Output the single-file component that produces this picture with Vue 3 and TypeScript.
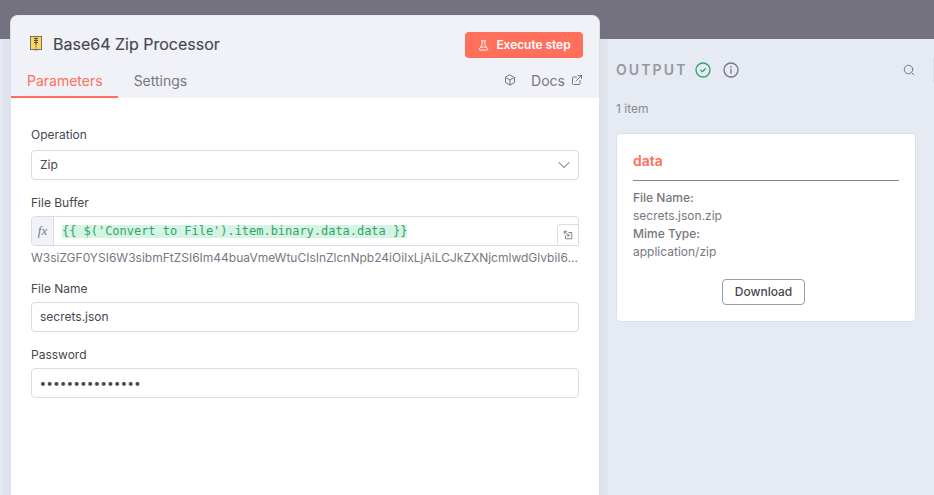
<template>
  <div class="ndv">
    <div class="input-edge" />

    <main class="panel">
      <header class="panel-header">
        <div class="title-row">
          <svg class="node-icon" viewBox="0 0 12 15">
            <rect x="0.5" y="0.5" width="11" height="13" fill="#ffd85b" stroke="#777260" />
            <path d="M6 1v12" stroke="#d3b55a" stroke-width="2" />
            <path d="M4 2.500h4M4 4.500h4M4 6.500h4" stroke="#4a4840" />
            <path d="M6 2v7" stroke="#6a6350" />
            <path d="M4 14.500h4" stroke="#c9c9cf" />
          </svg>
          <h1 class="title">Base64 Zip Processor</h1>
          <button class="execute">
            <svg class="flask" viewBox="0 0 24 24">
              <path d="M7.500 2h9M9 2v8.500L2.800 19.600A1.600 1.600 0 0 0 4.200 22h15.600a1.600 1.600 0 0 0 1.400-2.400L15 10.500V2M6 15.500h12" />
            </svg>
            <span>Execute step</span>
          </button>
        </div>

        <nav class="tabs">
          <a
            v-for="tab in tabs"
            :key="tab"
            class="tab"
            :class="{ active: tab === activeTab }"
            @click="activeTab = tab"
            >{{ tab }}</a
          >
          <svg class="cube" viewBox="0 0 24 24">
            <path d="M12 2l9 5v10l-9 5-9-5V7zM3 7l9 5 9-5M12 12v10" />
          </svg>
          <a class="docs">
            Docs
            <svg class="external" viewBox="0 0 24 24">
              <path d="M15 3h6v6M10 14L21 3M18 13v6a2 2 0 0 1-2 2H5a2 2 0 0 1-2-2V8a2 2 0 0 1 2-2h6" />
            </svg>
          </a>
        </nav>
      </header>

      <div class="form">
        <div class="field operation">
          <label>Operation</label>
          <div class="control">
            <span>Zip</span>
            <svg class="chevron" viewBox="0 0 12 8"><path d="M1 1.500l5 5 5-5" /></svg>
          </div>
        </div>

        <div class="field">
          <label>File Buffer</label>
          <div class="control expression">
            <span class="fx">fx</span>
            <code>{{ expression }}</code>
            <span class="expand">
              <svg viewBox="0 0 12 12">
                <path d="M7 3h3.500v7.500H3V7M1.500 4.500v-3h3M1.500 1.500L7 7M7.200 5v2.200H5" />
              </svg>
            </span>
          </div>
          <div class="preview">{{ preview }}</div>
        </div>

        <div class="field">
          <label>File Name</label>
          <div class="control">secrets.json</div>
        </div>

        <div class="field">
          <label>Password</label>
          <div class="control"><span class="masked">{{ masked }}</span></div>
        </div>
      </div>
    </main>

    <section class="output">
      <div class="output-header">
        <span class="output-title">OUTPUT</span>
        <svg class="status ok" viewBox="0 0 24 24">
          <circle cx="12" cy="12" r="10.500" />
          <path d="M8.500 12.200l2.500 2.300 4.500-4.500" />
        </svg>
        <svg class="status info" viewBox="0 0 24 24">
          <circle cx="12" cy="12" r="10.500" />
          <path d="M12 11v6M12 7v1" />
        </svg>
        <svg class="search" viewBox="0 0 24 24">
          <circle cx="11" cy="11" r="8.500" />
          <path d="M17.500 17.500L22 22" />
        </svg>
        <span class="toggle-edge" />
      </div>

      <div class="count">1 item</div>

      <article class="card">
        <h2>data</h2>
        <dl>
          <template v-for="row in meta" :key="row.label">
            <dt>{{ row.label }}</dt>
            <dd>{{ row.value }}</dd>
          </template>
        </dl>
        <button class="download">Download</button>
      </article>
    </section>
  </div>
</template>

<script setup lang="ts">
import { ref } from "vue";

const tabs = ["Parameters", "Settings"];
const activeTab = ref("Parameters");

const expression = "{{ $('Convert to File').item.binary.data.data }}";
const preview =
  "W3siZGF0YSI6W3sibmFtZSI6Im44buaVmeWtuCIsInZlcnNpb24iOiIxLjAiLCJkZXNjcmlwdGlvbiI6...";
const masked = "•".repeat(15);

const meta: { label: string; value: string }[] = [
  { label: "File Name:", value: "secrets.json.zip" },
  { label: "Mime Type:", value: "application/zip" },
];
</script>

<style>
body {
  margin: 0;
}
</style>

<style scoped>
.ndv {
  display: flex;
  width: 934px;
  height: 495px;
  overflow: hidden;
  background: #757280;
  color: #46484d;
  font-family: Inter, sans-serif;
  font-size: 12px;
}
.ndv * {
  box-sizing: border-box;
}
svg {
  fill: none;
  stroke: currentColor;
  stroke-width: 2;
  stroke-linecap: round;
  stroke-linejoin: round;
  flex: none;
}
button {
  font-family: inherit;
  cursor: pointer;
}

.input-edge {
  width: 10px;
  margin-top: 39px;
  background: linear-gradient(90deg, #e6eaf3 0 2px, #dfe3ee 2px);
}

/* main panel */
.panel {
  display: flex;
  flex-direction: column;
  width: 590px;
  margin-top: 15px;
  border: 1px solid #dbdfea;
  border-top-color: #e9eaf1;
  border-bottom: 0;
  border-radius: 8px 8px 0 0;
  overflow: hidden;
  background: #fff;
}
.panel-header {
  height: 82px;
  background: #f1f2f8;
}
.title-row {
  display: flex;
  align-items: center;
  height: 26px;
  margin: 16px 16px 0 19px;
}
.node-icon {
  width: 12px;
  height: 15px;
  margin-bottom: 3px;
  stroke-width: 1;
  stroke-linecap: butt;
  stroke-linejoin: miter;
}
.title {
  flex: 1;
  margin: 0 0 0 11px;
  padding-bottom: 2px;
  font-size: 16px;
  font-weight: 400;
  -webkit-text-stroke: 0.15px;
}
.execute {
  display: flex;
  align-items: center;
  justify-content: center;
  gap: 7px;
  width: 118px;
  height: 26px;
  padding: 0 0 2px 1px;
  border: 0;
  border-radius: 4px;
  background: #ff6f5c;
  color: #fff;
  font-size: 12px;
  font-weight: 600;
  letter-spacing: -0.05px;
}
.flask {
  width: 11px;
  height: 11px;
  margin-top: 2px;
}

.tabs {
  display: flex;
  align-items: center;
  height: 40px;
  padding-right: 16px;
  color: #77777f;
  font-size: 14px;
}
.tab {
  height: 40px;
  padding: 0 16px;
  line-height: 45px;
  cursor: pointer;
}
.tab.active {
  padding-right: 15px;
  border-bottom: 2px solid #ff6f5c;
  color: #ff6f5c;
}
.cube {
  width: 12px;
  height: 12px;
  margin: 3px 15px 0 auto;
}
.docs {
  display: flex;
  align-items: center;
  gap: 6px;
  padding-top: 4px;
}
.external {
  width: 12px;
  height: 12px;
}

/* form */
.form {
  padding: 28px 20px 0;
}
.field {
  margin-bottom: 14px;
}
label {
  display: block;
  height: 22px;
  line-height: 18px;
}
.operation label {
  height: 24px;
}
.control {
  display: flex;
  align-items: center;
  height: 30px;
  padding: 0 8px 2px;
  border: 1px solid #d8dce9;
  border-radius: 4px;
}
.chevron {
  width: 12px;
  height: 8px;
  margin: 2px 0 0 auto;
  color: #9b9ca5;
  stroke-width: 1.1;
}
.expression {
  padding: 0;
  border-bottom-right-radius: 0;
}
.fx {
  width: 22px;
  height: 28px;
  border-right: 1px solid #d8dce9;
  border-radius: 3px 0 0 3px;
  background: #f1f2f8;
  color: #77777f;
  font: italic 13px/27px "Liberation Serif", serif;
  text-align: center;
}
code {
  margin-left: 8px;
  background: #d5f4e4;
  color: #2fa66b;
  font: 12px/13px "DejaVu Sans Mono", monospace;
  letter-spacing: -0.03px;
  white-space: pre;
}
.expand {
  display: flex;
  align-items: center;
  justify-content: center;
  align-self: flex-end;
  width: 21px;
  height: 21px;
  margin-left: auto;
  border: 1px solid #d8dce9;
  border-width: 1px 0 0 1px;
  border-top-left-radius: 4px;
  color: #77777f;
}
.expand svg {
  width: 10px;
  height: 10px;
  stroke-width: 1.1;
}
.preview {
  height: 20px;
  overflow: hidden;
  color: #77777f;
  line-height: 24px;
  white-space: nowrap;
}
.masked {
  margin-left: -0.5px;
}

/* output */
.output {
  flex: 1;
  margin-top: 39px;
  padding: 19px 0 0 16px;
  background: linear-gradient(90deg, #dfe3ec 0, #e1e5ee 8px, #e6eaf3 8px);
  color: #77777f;
}
.output-header {
  display: flex;
  align-items: center;
  height: 23px;
}
.output-title {
  width: 79px;
  color: #98989d;
  font-size: 14px;
  font-weight: 600;
  letter-spacing: 2.1px;
}
.status {
  width: 16px;
  height: 16px;
}
.ok {
  color: #2fa66b;
}
.info {
  margin-left: 12px;
}
.search {
  width: 12px;
  height: 12px;
  margin-left: auto;
  margin-right: 18px;
}
.toggle-edge {
  width: 1px;
  height: 26px;
  background: #dadde8;
}
.count {
  margin-top: 19px;
  line-height: 18px;
  color: #8b8b92;
}
.card {
  width: 300px;
  height: 189px;
  margin-top: 15px;
  padding: 16px;
  border: 1px solid #dce0eb;
  border-radius: 4px;
  background: #fff;
}
h2 {
  height: 31px;
  margin: 0 0 8px;
  border-bottom: 1px solid #898993;
  color: #ff6f5c;
  font-size: 14px;
  font-weight: 600;
  line-height: 22px;
}
dl {
  margin: 0;
  line-height: 18px;
}
dt {
  font-weight: 500;
}
dd {
  margin: 0;
}
.download {
  display: block;
  width: 83px;
  height: 26px;
  margin: 18px 0 0 89px;
  padding: 0 0 2px;
  border: 1px solid #9b9daa;
  border-radius: 4px;
  background: #fff;
  color: #46484d;
  font-size: 12px;
  font-weight: 500;
}
</style>
